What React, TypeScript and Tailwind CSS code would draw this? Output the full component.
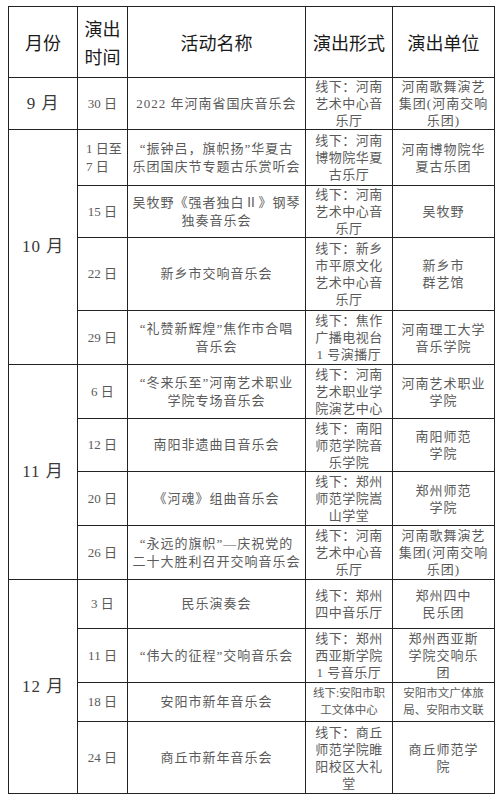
import React from "react";

type Row = {
  date: string[];
  dateLeft?: boolean;
  name: string[];
  form: string[];
  unit: string[];
  h: number;
  small?: boolean;
};

type Group = { month: string; rows: Row[] };

const groups: Group[] = [
  {
    month: "9 月",
    rows: [
      {
        date: ["30 日"],
        name: ["2022 年河南省国庆音乐会"],
        form: ["线下：河南", "艺术中心音", "乐厅"],
        unit: ["河南歌舞演艺", "集团(河南交响", "乐团)"],
        h: 51,
      },
    ],
  },
  {
    month: "10 月",
    rows: [
      {
        date: ["1 日至", "7 日"],
        dateLeft: true,
        name: ["“振钟吕，旗帜扬”华夏古", "乐团国庆节专题古乐赏听会"],
        form: ["线下：河南", "博物院华夏", "古乐厅"],
        unit: ["河南博物院华", "夏古乐团"],
        h: 56,
      },
      {
        date: ["15 日"],
        name: ["吴牧野《强者独白Ⅱ》钢琴", "独奏音乐会"],
        form: ["线下：河南", "艺术中心音", "乐厅"],
        unit: ["吴牧野"],
        h: 52,
      },
      {
        date: ["22 日"],
        name: ["新乡市交响音乐会"],
        form: ["线下：新乡", "市平原文化", "艺术中心音", "乐厅"],
        unit: ["新乡市", "群艺馆"],
        h: 73,
      },
      {
        date: ["29 日"],
        name: ["“礼赞新辉煌”焦作市合唱", "音乐会"],
        form: ["线下：焦作", "广播电视台", "1 号演播厅"],
        unit: ["河南理工大学", "音乐学院"],
        h: 54,
      },
    ],
  },
  {
    month: "11 月",
    rows: [
      {
        date: ["6 日"],
        name: ["“冬来乐至”河南艺术职业", "学院专场音乐会"],
        form: ["线下：河南", "艺术职业学", "院演艺中心"],
        unit: ["河南艺术职业", "学院"],
        h: 54,
      },
      {
        date: ["12 日"],
        name: ["南阳非遗曲目音乐会"],
        form: ["线下：南阳", "师范学院音", "乐学院"],
        unit: ["南阳师范", "学院"],
        h: 53,
      },
      {
        date: ["20 日"],
        name: ["《河魂》组曲音乐会"],
        form: ["线下：郑州", "师范学院嵩", "山学堂"],
        unit: ["郑州师范", "学院"],
        h: 54,
      },
      {
        date: ["26 日"],
        name: ["“永远的旗帜”—庆祝党的", "二十大胜利召开交响音乐会"],
        form: ["线下：河南", "艺术中心音", "乐厅"],
        unit: ["河南歌舞演艺", "集团(河南交响", "乐团)"],
        h: 54,
      },
    ],
  },
  {
    month: "12 月",
    rows: [
      {
        date: ["3 日"],
        name: ["民乐演奏会"],
        form: ["线下：郑州", "四中音乐厅"],
        unit: ["郑州四中", "民乐团"],
        h: 49,
      },
      {
        date: ["11 日"],
        name: ["“伟大的征程”交响音乐会"],
        form: ["线下：郑州", "西亚斯学院", "1 号音乐厅"],
        unit: ["郑州西亚斯", "学院交响乐", "团"],
        h: 54,
      },
      {
        date: ["18 日"],
        name: ["安阳市新年音乐会"],
        form: ["线下:安阳市职", "工文体中心"],
        unit: ["安阳市文广体旅", "局、安阳市文联"],
        h: 39,
        small: true,
      },
      {
        date: ["24 日"],
        name: ["商丘市新年音乐会"],
        form: ["线下：商丘", "师范学院睢", "阳校区大礼", "堂"],
        unit: ["商丘师范学", "院"],
        h: 72,
      },
    ],
  },
];

const Lines = ({ lines }: { lines: string[] }) => (
  <>
    {lines.map((l, i) => (
      <div key={i} className="whitespace-nowrap">
        {l}
      </div>
    ))}
  </>
);

const cell = "border-[1.5px] border-[#222] p-0 align-middle";

export default function App() {
  return (
    <div
      className="w-[502px] h-[799px] bg-white pt-[6px] pl-[8px]"
      style={{ fontFamily: '"Liberation Serif", "Noto Sans CJK SC", serif' }}
    >
      <table className="table-fixed border-collapse w-[486px]">
        <colgroup>
          <col className="w-[69px]" />
          <col className="w-[50px]" />
          <col className="w-[178px]" />
          <col className="w-[87px]" />
          <col className="w-[102px]" />
        </colgroup>
        <thead>
          <tr
            className="h-[71px] text-[18px] text-[#1a1a1a] leading-[28px]"
            style={{ fontFamily: '"Noto Sans CJK SC", sans-serif' }}
          >
            <th className={`${cell} font-normal text-center`}>月份</th>
            <th className={`${cell} font-normal text-center`}>
              <div>演出</div>
              <div>时间</div>
            </th>
            <th className={`${cell} font-normal text-center`}>活动名称</th>
            <th className={`${cell} font-normal text-center`}>演出形式</th>
            <th className={`${cell} font-normal text-center`}>演出单位</th>
          </tr>
        </thead>
        <tbody className="text-[#5a5a5a]">
          {groups.map((g) =>
            g.rows.map((r, i) => (
              <tr key={g.month + i} style={{ height: r.h }}>
                {i === 0 && (
                  <td
                    rowSpan={g.rows.length}
                    className={`${cell} text-center text-[17px] text-[#3a3a3a] tracking-[1px]`}
                  >
                    {g.month}
                  </td>
                )}
                <td
                  className={`${cell} text-[13px] leading-[18px] ${
                    r.dateLeft ? "text-left pl-[8px]" : "text-center"
                  }`}
                >
                  <Lines lines={r.date} />
                </td>
                <td className={`${cell} text-center text-[13px] leading-[18px] tracking-[1px]`}>
                  <Lines lines={r.name} />
                </td>
                <td
                  className={`${cell} text-center ${
                    r.small
                      ? "text-[11.5px] leading-[17px] tracking-[0px]"
                      : "text-[13px] leading-[17px] tracking-[0.5px]"
                  }`}
                >
                  <Lines lines={r.form} />
                </td>
                <td
                  className={`${cell} text-center ${
                    r.small
                      ? "text-[11.5px] leading-[17px] tracking-[0px]"
                      : "text-[13px] leading-[17px] tracking-[1px]"
                  }`}
                >
                  <Lines lines={r.unit} />
                </td>
              </tr>
            ))
          )}
        </tbody>
      </table>
    </div>
  );
}
